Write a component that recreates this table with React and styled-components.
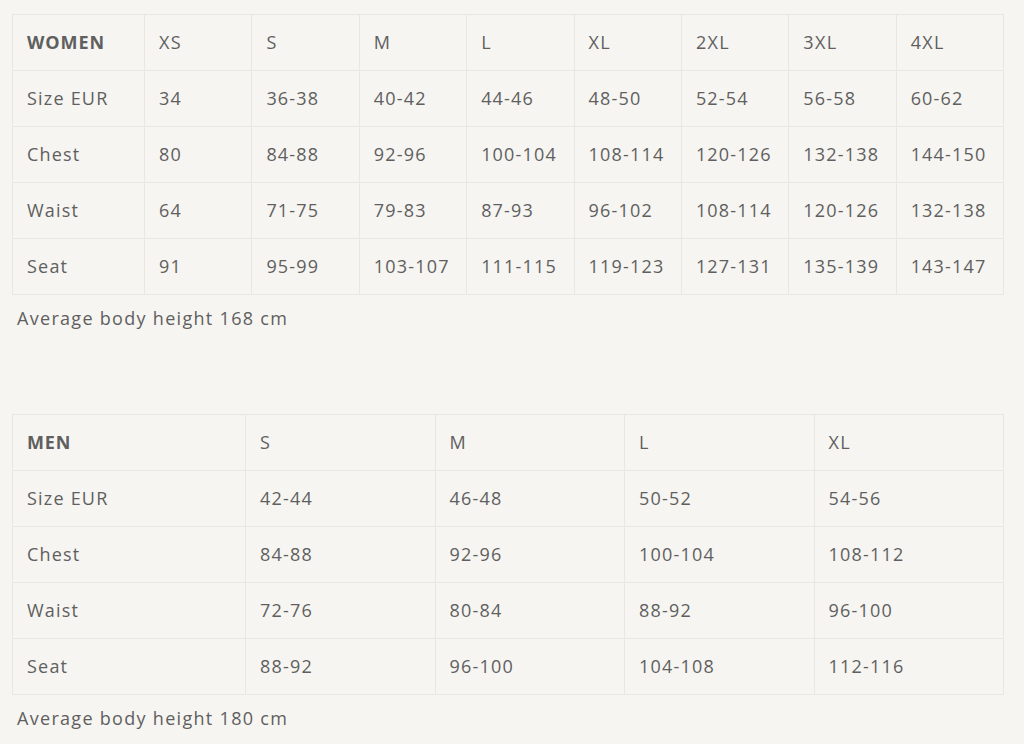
import React from 'react'
import styled, { createGlobalStyle } from 'styled-components'

const GlobalStyle = createGlobalStyle`
  html, body {
    margin: 0;
    background: #f6f5f1;
  }
  body {
    font-family: "Open Sans", Lato, sans-serif;
    color: #5f5f5f;
  }
`

const Page = styled.div`
  padding: 14px 20px 0 12px;
`

const Section = styled.section`
  margin-bottom: 82px;
`

const Table = styled.table`
  width: 992px;
  border-collapse: collapse;
  table-layout: fixed;
`

const Cell = styled.td`
  height: 53px;
  padding: 0 0 2px 14px;
  border: 1px solid #e9e7e2;
  font-size: 18px;
  letter-spacing: 1.2px;
  white-space: nowrap;
  vertical-align: middle;
  text-align: left;
`

const HeadCell = styled(Cell)`
  font-weight: ${p => (p.$label ? 700 : 400)};
  letter-spacing: ${p => (p.$label ? '0.9px' : '1.4px')};
`

const Caption = styled.p`
  margin: 9px 0 0 5px;
  font-size: 18px;
  line-height: 28px;
  letter-spacing: 1.3px;
`

const women = {
  title: 'WOMEN',
  firstCol: 132,
  sizes: ['XS', 'S', 'M', 'L', 'XL', '2XL', '3XL', '4XL'],
  rows: [
    ['Size EUR', '34', '36-38', '40-42', '44-46', '48-50', '52-54', '56-58', '60-62'],
    ['Chest', '80', '84-88', '92-96', '100-104', '108-114', '120-126', '132-138', '144-150'],
    ['Waist', '64', '71-75', '79-83', '87-93', '96-102', '108-114', '120-126', '132-138'],
    ['Seat', '91', '95-99', '103-107', '111-115', '119-123', '127-131', '135-139', '143-147'],
  ],
  height: 168,
}

const men = {
  title: 'MEN',
  firstCol: 233,
  sizes: ['S', 'M', 'L', 'XL'],
  rows: [
    ['Size EUR', '42-44', '46-48', '50-52', '54-56'],
    ['Chest', '84-88', '92-96', '100-104', '108-112'],
    ['Waist', '72-76', '80-84', '88-92', '96-100'],
    ['Seat', '88-92', '96-100', '104-108', '112-116'],
  ],
  height: 180,
}

const SizeTable = ({ chart }) => (
  <Section>
    <Table>
      <colgroup>
        <col style={{ width: chart.firstCol }} />
        {chart.sizes.map(s => <col key={s} />)}
      </colgroup>
      <thead>
        <tr>
          <HeadCell as="th" $label>{chart.title}</HeadCell>
          {chart.sizes.map(s => <HeadCell as="th" key={s}>{s}</HeadCell>)}
        </tr>
      </thead>
      <tbody>
        {chart.rows.map(r => (
          <tr key={r[0]}>
            {r.map((v, i) => <Cell key={i}>{v}</Cell>)}
          </tr>
        ))}
      </tbody>
    </Table>
    <Caption>Average body height {chart.height} cm</Caption>
  </Section>
)

const App = () => (
  <Page>
    <GlobalStyle />
    <SizeTable chart={women} />
    <SizeTable chart={men} />
  </Page>
)

export default App
